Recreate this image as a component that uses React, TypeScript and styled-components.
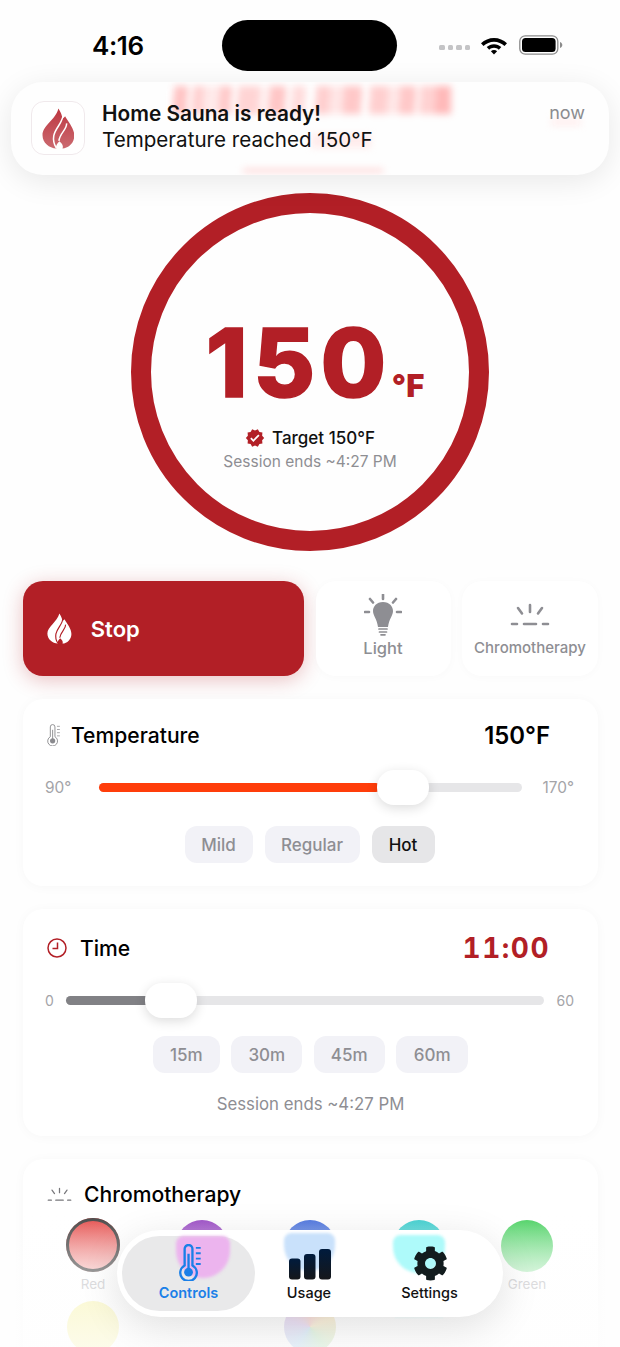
import React from "react";
import styled, { createGlobalStyle } from "styled-components";
import { FaCog } from "react-icons/fa";
import { MdVerified } from "react-icons/md";

const RED = "#b21f26";
const GRAY = "#8e8e93";

const Global = createGlobalStyle`
  html, body { margin: 0; padding: 0; background: #fff; }
  body { font-family: Inter, "Liberation Sans", sans-serif; -webkit-font-smoothing: antialiased; }
  * { box-sizing: border-box; }
`;

const Phone = styled.div`
  position: relative;
  width: 620px;
  height: 1347px;
  overflow: hidden;
  background: #fefefe;
`;

const StatusBar = styled.div`
  height: 193px;
  padding: 20px 57px 0 92px;
  display: flex;
  align-items: flex-start;
`;
const Clock = styled.div`
  width: 130px;
  margin-top: 10px;
  font-size: 26px;
  line-height: 32px;
  font-weight: 600;
  color: #000;
  letter-spacing: -0.4px;
`;
const Island = styled.div`
  width: 176px;
  height: 51px;
  border-radius: 26px;
  background: #000;
`;
const StatusIcons = styled.div`
  margin-left: 42px;
  margin-top: 15px;
  display: flex;
  align-items: center;
`;
const Dots = styled.div`
  display: flex;
  gap: 3px;
  margin-right: 10px;
  margin-top: 5px;
`;
const Dot = styled.span`
  width: 5.5px;
  height: 5.5px;
  border-radius: 1.5px;
  background: #c4c4c6;
`;
const IconGap = styled.span`
  width: 11px;
`;

const Notification = styled.div`
  position: absolute;
  left: 11px;
  top: 82px;
  width: 598px;
  height: 93px;
  border-radius: 32px;
  background: #fefefe;
  box-shadow: 0 6px 30px rgba(0, 0, 0, 0.09);
  overflow: hidden;
  display: flex;
  align-items: flex-start;
  padding: 19px 24px 19px 20px;
  z-index: 5;
`;
const Smear = styled.div<{ $l: number; $t: number; $w: number; $h: number; $c: string }>`
  position: absolute;
  left: ${(p) => p.$l}px;
  top: ${(p) => p.$t}px;
  width: ${(p) => p.$w}px;
  height: ${(p) => p.$h}px;
  background: ${(p) => p.$c};
  filter: blur(3.5px);
`;
const AppIcon = styled.div`
  position: relative;
  width: 54px;
  height: 54px;
  border-radius: 13px;
  background: #fff;
  border: 1px solid #f0e9ec;
  display: flex;
  align-items: center;
  justify-content: center;
  flex: none;
`;
const NotifText = styled.div`
  position: relative;
  margin-left: 17px;
  flex: 1;
  color: #111;
  font-size: 20.6px;
  line-height: 26px;
`;
const NotifTitle = styled.div`
  font-weight: 600;
  font-size: 20.8px;
`;
const NotifNow = styled.div`
  position: relative;
  font-size: 18px;
  line-height: 24px;
  color: #8b8b8f;
`;

const Gauge = styled.div`
  width: 358px;
  height: 358px;
  margin: 0 auto;
  border: 20px solid ${RED};
  border-radius: 50%;
  display: flex;
  flex-direction: column;
  align-items: center;
  padding-top: 115px;
`;
const Reading = styled.div`
  display: flex;
  align-items: baseline;
  margin-left: 10px;
  color: ${RED};
  font-weight: 800;
  line-height: 70px;
`;
const Digits = styled.span`
  font-size: 95px;
  letter-spacing: 5.5px;
  -webkit-text-stroke: 1.5px ${RED};
  paint-order: stroke fill;
`;
const Unit = styled.span`
  font-size: 31px;
  font-weight: 900;
`;
const TargetRow = styled.div`
  margin-top: 5px;
  display: flex;
  align-items: center;
  gap: 7px;
  font-size: 17px;
  line-height: 24px;
  font-weight: 500;
  color: #111;
`;
const GaugeSession = styled.div`
  margin-top: 1px;
  font-size: 15.5px;
  line-height: 21px;
  color: ${GRAY};
`;

const Content = styled.div`
  padding: 30px 22px 0 23px;
  display: flex;
  flex-direction: column;
  gap: 23px;
`;
const Actions = styled.div`
  display: grid;
  grid-template-columns: 281px 135px 136px;
  gap: 11.5px;
  height: 95px;
`;
const StopButton = styled.div`
  background: ${RED};
  border-radius: 20px;
  box-shadow: 0 4px 20px rgba(178, 31, 38, 0.28);
  color: #fff;
  display: flex;
  align-items: center;
  padding-left: 24px;
  gap: 19px;
  font-size: 22px;
  font-weight: 600;
`;
const ActionTile = styled.div`
  background: #fff;
  border-radius: 20px;
  box-shadow: 0 1px 10px rgba(0, 0, 0, 0.025);
  display: flex;
  flex-direction: column;
  align-items: center;
  justify-content: flex-end;
  padding-bottom: 18px;
  color: ${GRAY};
  line-height: 20px;
  font-weight: 500;
`;
const TileLabel = styled.div<{ $big?: boolean }>`
  font-size: ${(p) => (p.$big ? 16.5 : 15)}px;
  margin-top: ${(p) => (p.$big ? 2 : 11)}px;
`;

const Card = styled.section<{ $h: number; $pt: number }>`
  height: ${(p) => p.$h}px;
  background: #fff;
  border-radius: 20px;
  box-shadow: 0 1px 12px rgba(0, 0, 0, 0.03);
  padding: ${(p) => p.$pt}px 22px 0;
`;
const CardHeader = styled.div`
  display: flex;
  align-items: center;
  height: 28px;
  padding-right: 26px;
`;
const HeaderIcon = styled.span<{ $ml: number }>`
  display: flex;
  margin-left: ${(p) => p.$ml}px;
`;
const CardTitle = styled.h2<{ $gap: number }>`
  margin: 0 0 0 ${(p) => p.$gap}px;
  font-size: 21.1px;
  font-weight: 500;
  color: #000;
  flex: 1;
`;
const CardValue = styled.div<{ $red?: boolean }>`
  font-size: ${(p) => (p.$red ? 28 : 23.9)}px;
  font-weight: ${(p) => (p.$red ? 700 : 600)};
  letter-spacing: ${(p) => (p.$red ? 1.5 : 0)}px;
  font-variant-numeric: ${(p) => (p.$red ? "tabular-nums" : "normal")};
  color: ${(p) => (p.$red ? RED : "#000")};
`;
const SliderRow = styled.div<{ $mt: number }>`
  margin-top: ${(p) => p.$mt}px;
  height: 34px;
  padding-right: 2px;
  display: flex;
  align-items: center;
`;
const SliderEnd = styled.span<{ $size: number }>`
  font-size: ${(p) => p.$size}px;
  color: #a4a4a8;
`;
const Track = styled.div<{ $gl: number; $gr: number }>`
  position: relative;
  flex: 1;
  height: 9px;
  margin: 0 ${(p) => p.$gr}px 0 ${(p) => p.$gl}px;
  border-radius: 5px;
  background: #e6e6e8;
`;
const Fill = styled.div<{ $c: string }>`
  height: 100%;
  border-radius: 5px;
  background: ${(p) => p.$c};
`;
const Thumb = styled.div`
  position: absolute;
  top: -13px;
  width: 52px;
  height: 35px;
  margin-left: -26px;
  border-radius: 17px;
  background: #fff;
  box-shadow: 0 3px 12px rgba(0, 0, 0, 0.14);
`;
const Chips = styled.div<{ $mt: number; $gap: number; $pr: number }>`
  margin-top: ${(p) => p.$mt}px;
  padding-right: ${(p) => p.$pr}px;
  display: flex;
  justify-content: center;
  gap: ${(p) => p.$gap}px;
`;
const Chip = styled.div<{ $on?: boolean; $w: number }>`
  width: ${(p) => p.$w}px;
  height: 37px;
  border-radius: 12px;
  display: flex;
  align-items: center;
  justify-content: center;
  font-size: 17px;
  font-weight: 500;
  background: ${(p) => (p.$on ? "#e6e6e8" : "#f2f2f7")};
  color: ${(p) => (p.$on ? "#111" : GRAY)};
`;
const SessionNote = styled.div`
  margin-top: 20px;
  text-align: center;
  font-size: 16.8px;
  line-height: 22px;
  color: ${GRAY};
`;
const Swatches = styled.div`
  margin-top: 12px;
  margin-left: 21px;
  margin-right: 22px;
  display: grid;
  grid-template-columns: repeat(5, 54px);
  justify-content: space-between;
  row-gap: 8px;
`;
const Swatch = styled.div`
  display: flex;
  flex-direction: column;
  align-items: center;
  gap: 3px;
  font-size: 13.5px;
  line-height: 18px;
  color: #b8b8bc;
`;
const SwatchDot = styled.div<{ $bg: string; $ring?: boolean }>`
  width: ${(p) => (p.$ring ? 54 : 52)}px;
  height: ${(p) => (p.$ring ? 54 : 52)}px;
  margin: ${(p) => (p.$ring ? -2 : 0)}px 0 0;
  border-radius: 50%;
  background: ${(p) => p.$bg};
  ${(p) => (p.$ring ? "box-shadow: inset 0 0 0 3px #4a4a4a;" : "")}
`;

const Fade = styled.div`
  position: absolute;
  left: 0;
  right: 0;
  top: 1215px;
  bottom: 0;
  background: linear-gradient(to bottom, rgba(254, 254, 254, 0) 0%, rgba(254, 254, 254, 0.5) 50%, rgba(254, 254, 254, 0.78) 100%);
`;
const NavBar = styled.nav`
  position: absolute;
  left: 117px;
  top: 1230px;
  width: 386px;
  height: 87px;
  border-radius: 44px;
  background: #fff;
  box-shadow: 0 10px 40px rgba(0, 0, 0, 0.12);
  padding: 6px 5px;
  display: grid;
  grid-template-columns: 133px 108px 133px;
  overflow: hidden;
`;
const Blob = styled.div<{ $l: number; $t: number; $w: number; $h: number; $c: string }>`
  position: absolute;
  left: ${(p) => p.$l}px;
  top: ${(p) => p.$t}px;
  width: ${(p) => p.$w}px;
  height: ${(p) => p.$h}px;
  background: ${(p) => p.$c};
  border-radius: 8px 8px 28px 28px;
  filter: blur(1.5px);
`;
const NavItem = styled.div<{ $on?: boolean }>`
  position: relative;
  border-radius: 38px;
  background: ${(p) => (p.$on ? "#e9e9ea" : "transparent")};
  color: ${(p) => (p.$on ? "#1a7fe8" : "#111")};
  display: flex;
  flex-direction: column;
  align-items: center;
  justify-content: flex-end;
  padding-bottom: 9px;
  font-size: 14.5px;
  line-height: 18px;
  font-weight: ${(p) => (p.$on ? 600 : 500)};
`;
const NavIcon = styled.div<{ $dx: number; $mb: number }>`
  position: relative;
  height: 38px;
  margin: 0 0 ${(p) => p.$mb}px ${(p) => p.$dx}px;
  display: flex;
  align-items: flex-end;
  justify-content: center;
`;
const NavLabel = styled.span`
  position: relative;
`;

const Flame: React.FC<{ size: number; color: string; cut: string; grad?: boolean }> = ({ size, color, cut, grad }) => (
  <svg width={size * 0.8} height={size} viewBox="0 0 32 40">
    <defs>
      <linearGradient id="flameGrad" x1="0" y1="0" x2="0" y2="1">
        <stop offset="0" stopColor="#bd3640" />
        <stop offset="1" stopColor="#cb6a70" />
      </linearGradient>
    </defs>
    <path
      d="M16 0.500 C19 5 19.500 8 20 10 C21 9.500 22 9 22.500 8 C26 14 31.500 20 31.500 27 C31.500 34 26 39 20 39.500 C21 37.500 20 35 17 32.500 C14.500 35 13 37.500 14 39.500 C7 39 0.500 34 0.500 26.500 C0.500 17 13 12 16 0.500Z"
      fill={grad ? "url(#flameGrad)" : color}
    />
    <path d="M20.500 6 C21 14 13 19 11.500 27 C10.800 31 12 36 14 39" fill="none" stroke={cut} strokeWidth="1.500" />
    <path d="M24 15 C24.500 21 17.500 24 16.500 32" fill="none" stroke={cut} strokeWidth="1.500" />
  </svg>
);

const Thermo: React.FC<{ w: number; h: number; color: string; sw: number }> = ({ w, h, color, sw }) => (
  <svg width={w} height={h} viewBox="0 0 24 38" fill="none" stroke={color}>
    <path d="M6.500 5 a4 4 0 0 1 8 0 V22 a8.500 8.500 0 1 1 -8 0 Z" strokeWidth={sw} />
    <circle cx="10.500" cy="29" r="4.500" fill={color} stroke="none" />
    <path d="M10.500 29 V10" strokeWidth={sw} />
    <path d="M18 4 H23 M18 9.500 H23 M18 15 H23 M18 20.500 H23" strokeWidth={sw * 0.8} />
  </svg>
);

const Chromo: React.FC<{ w: number; color: string; sw: number }> = ({ w, color, sw }) => (
  <svg width={w} height={w * 0.6} viewBox="0 0 40 24" fill="none" stroke={color} strokeWidth={sw} strokeLinecap="round">
    <path d="M20 2 V9 M8 5 L12 10.500 M32 5 L28 10.500 M2 21 H7 M14 21 H26 M33 21 H38" />
  </svg>
);

const Bulb = () => (
  <svg width="38" height="42" viewBox="0 0 38 42" fill={GRAY}>
    <path d="M19 8 C25.500 8 29 12.500 29 17 C29 21.500 25 25 24 33 H14 C13 25 9 21.500 9 17 C9 12.500 12.500 8 19 8Z" />
    <path d="M15 35 H23 M15.500 38 H22.500 M17 40.800 H21" stroke={GRAY} strokeWidth="1.700" strokeLinecap="round" />
    <path d="M19 0.500 V5 M6 5 L9 8.500 M32 5 L29 8.500 M1 18 H5 M33 18 H37" stroke={GRAY} strokeWidth="2.600" strokeLinecap="round" />
  </svg>
);

const ClockIcon = () => (
  <svg width="20" height="20" viewBox="0 0 20 20" fill="none" stroke={RED} strokeWidth="1.500">
    <circle cx="10" cy="10" r="9" />
    <path d="M10.500 4.500 V10.500 H5.500" />
  </svg>
);

const Bars = () => (
  <svg width="42" height="31" viewBox="0 0 42 31">
    <defs>
      <linearGradient id="bars" x1="0" y1="0" x2="0" y2="1">
        <stop offset="0" stopColor="#001b3d" />
        <stop offset="1" stopColor="#15171a" />
      </linearGradient>
    </defs>
    <rect x="0" y="9.500" width="11.500" height="21" rx="3" fill="url(#bars)" />
    <rect x="15" y="5" width="11.500" height="25.500" rx="3" fill="url(#bars)" />
    <rect x="30" y="0" width="12" height="30.500" rx="3" fill="url(#bars)" />
  </svg>
);

const Wifi = () => (
  <svg width="28" height="20" viewBox="0 0 28 20" fill="#000">
    <path d="M14 3 C19 3 23.500 5 27 8.300 L24.500 11 C21.700 8.300 18 6.700 14 6.700 C10 6.700 6.300 8.300 3.500 11 L1 8.300 C4.500 5 9 3 14 3Z" />
    <path d="M14 9.200 C16.800 9.200 19.300 10.300 21.300 12.100 L18.800 14.700 C17.500 13.500 15.800 12.800 14 12.800 C12.200 12.800 10.500 13.500 9.200 14.700 L6.700 12.100 C8.700 10.300 11.200 9.200 14 9.200Z" />
    <path d="M14 15 C15.200 15 16.300 15.400 17.100 16.200 L14 19.500 L10.900 16.200 C11.700 15.400 12.800 15 14 15Z" />
  </svg>
);

const Battery = () => (
  <svg width="44" height="20" viewBox="0 0 44 20">
    <rect x="0.800" y="0.800" width="38" height="18.400" rx="5.500" fill="none" stroke="#8b8b8b" strokeWidth="1.300" />
    <rect x="3" y="3" width="33.600" height="14" rx="3.500" fill="#000" />
    <path d="M41 7 C42.500 7.500 43.300 8.700 43.300 10 C43.300 11.300 42.500 12.500 41 13Z" fill="#8b8b8b" />
  </svg>
);

const chips = [
  { label: "15m", w: 67 },
  { label: "30m", w: 71 },
  { label: "45m", w: 71 },
  { label: "60m", w: 72 },
];

const swatches = [
  { label: "Red", bg: "linear-gradient(#e5504e,#f6c0bf)", ring: true },
  { label: "", bg: "linear-gradient(#9f52c8,#d8b0ea)" },
  { label: "", bg: "linear-gradient(#5178e0,#b0c4f2)" },
  { label: "", bg: "linear-gradient(#45d2d2,#a8eeee)" },
  { label: "Green", bg: "linear-gradient(#52d268,#b4ecbe)" },
  { label: "", bg: "#f7f2a0" },
  { label: "", bg: "transparent" },
  { label: "", bg: "conic-gradient(#f2a9a0,#f4dc9a,#a8dfa8,#9ccbef,#c9a9e6,#f2a9a0)" },
  { label: "", bg: "linear-gradient(#c8fbfb 24%, transparent 36%)" },
  { label: "", bg: "transparent" },
];

const smearBg =
  "linear-gradient(93deg,#fff 0 8px,#ffc4c4 8px 22px,#fff 22px 27px,#ffd0d0 27px 38px,#ffeaea 38px 54px,#ffc9c9 54px 66px,#fff 66px 72px,#ffd4d4 72px 94px,#fff2f2 94px 104px,#ffc6c6 104px 120px,#fff 120px 126px,#ffdcdc 126px 140px,#fff 140px 150px,#ffcfcf 150px 164px,#ffe6e6 164px 178px,#ffc8c8 178px 196px,#fff 196px 204px,#ffcfcf 204px 222px,#ffe8e8 222px 234px,#ffc8c8 234px 250px,#fff 250px 254px,#ffd2d2 254px 270px,#ffb9b9 270px 285px)";

export default function App() {
  return (
    <Phone>
      <Global />
      <StatusBar>
        <Clock>4:16</Clock>
        <Island />
        <StatusIcons>
          <Dots>
            <Dot />
            <Dot />
            <Dot />
            <Dot />
          </Dots>
          <Wifi />
          <IconGap />
          <Battery />
        </StatusIcons>
      </StatusBar>

      <Notification>
        <Smear $l={155} $t={4} $w={285} $h={28} $c={smearBg} />
        <Smear $l={300} $t={52} $w={60} $h={14} $c="#ffecec" />
        <Smear $l={232} $t={87} $w={140} $h={3} $c="#ffcaca" />
        <Smear $l={540} $t={36} $w={30} $h={8} $c="#fff0f0" />
        <AppIcon>
          <Flame size={41} color="#c2434b" cut="#fff" grad />
        </AppIcon>
        <NotifText>
          <NotifTitle>Home Sauna is ready!</NotifTitle>
          <div>Temperature reached 150°F</div>
        </NotifText>
        <NotifNow>now</NotifNow>
      </Notification>

      <Gauge>
        <Reading>
          <Digits>150</Digits>
          <Unit>°F</Unit>
        </Reading>
        <TargetRow>
          <MdVerified size={20} color={RED} />
          Target 150°F
        </TargetRow>
        <GaugeSession>Session ends ~4:27 PM</GaugeSession>
      </Gauge>

      <Content>
        <Actions>
          <StopButton>
            <Flame size={31} color="#fff" cut={RED} />
            Stop
          </StopButton>
          <ActionTile>
            <Bulb />
            <TileLabel $big>Light</TileLabel>
          </ActionTile>
          <ActionTile>
            <Chromo w={40} color={GRAY} sw={2.6} />
            <TileLabel>Chromotherapy</TileLabel>
          </ActionTile>
        </Actions>

        <Card $h={187} $pt={22}>
          <CardHeader>
            <HeaderIcon $ml={1}>
              <Thermo w={15} h={22} color="#8a8a8e" sw={1.6} />
            </HeaderIcon>
            <CardTitle $gap={10}>Temperature</CardTitle>
            <CardValue>150°F</CardValue>
          </CardHeader>
          <SliderRow $mt={21}>
            <SliderEnd $size={15.4}>90°</SliderEnd>
            <Track $gl={28} $gr={21}>
              <Fill $c="#ff3d0a" style={{ width: "66.5%" }} />
              <Thumb style={{ left: "72%" }} />
            </Track>
            <SliderEnd $size={15.4}>170°</SliderEnd>
          </SliderRow>
          <Chips $mt={22} $gap={12} $pr={2}>
            <Chip $w={68}>Mild</Chip>
            <Chip $w={95}>Regular</Chip>
            <Chip $w={63} $on>
              Hot
            </Chip>
          </Chips>
        </Card>

        <Card $h={227} $pt={25}>
          <CardHeader>
            <HeaderIcon $ml={2}>
              <ClockIcon />
            </HeaderIcon>
            <CardTitle $gap={13}>Time</CardTitle>
            <CardValue $red>11:00</CardValue>
          </CardHeader>
          <SliderRow $mt={21}>
            <SliderEnd $size={14}>0</SliderEnd>
            <Track $gl={12} $gr={12}>
              <Fill $c="#818185" style={{ width: "18%" }} />
              <Thumb style={{ left: "22%" }} />
            </Track>
            <SliderEnd $size={14}>60</SliderEnd>
          </SliderRow>
          <Chips $mt={19} $gap={11.5} $pr={0}>
            {chips.map((c) => (
              <Chip key={c.label} $w={c.w}>
                {c.label}
              </Chip>
            ))}
          </Chips>
          <SessionNote>Session ends ~4:27 PM</SessionNote>
        </Card>

        <Card $h={300} $pt={21}>
          <CardHeader>
            <HeaderIcon $ml={2}>
              <Chromo w={25} color="#77777b" sw={2} />
            </HeaderIcon>
            <CardTitle $gap={12}>Chromotherapy</CardTitle>
          </CardHeader>
          <Swatches>
            {swatches.map((s, i) => (
              <Swatch key={i}>
                <SwatchDot $bg={s.bg} $ring={s.ring} />
                {s.label}
              </Swatch>
            ))}
          </Swatches>
        </Card>
      </Content>

      <Fade />

      <NavBar>
        <NavItem $on>
          <Blob $l={54} $t={0} $w={54} $h={42} $c="#ecb4ee" />
          <NavIcon $dx={3} $mb={3}>
            <Thermo w={24} h={37} color="#1a7fe8" sw={2.4} />
          </NavIcon>
          <NavLabel>Controls</NavLabel>
        </NavItem>
        <NavItem>
          <Blob $l={29} $t={-3} $w={51} $h={38} $c="#c9e1fb" />
          <NavIcon $dx={1} $mb={4}>
            <Bars />
          </NavIcon>
          <NavLabel>Usage</NavLabel>
        </NavItem>
        <NavItem>
          <Blob $l={30} $t={-1} $w={52} $h={38} $c="#aefafa" />
          <NavIcon $dx={1} $mb={3}>
            <FaCog size={35} color="#121c1e" />
          </NavIcon>
          <NavLabel>Settings</NavLabel>
        </NavItem>
      </NavBar>
    </Phone>
  );
}
